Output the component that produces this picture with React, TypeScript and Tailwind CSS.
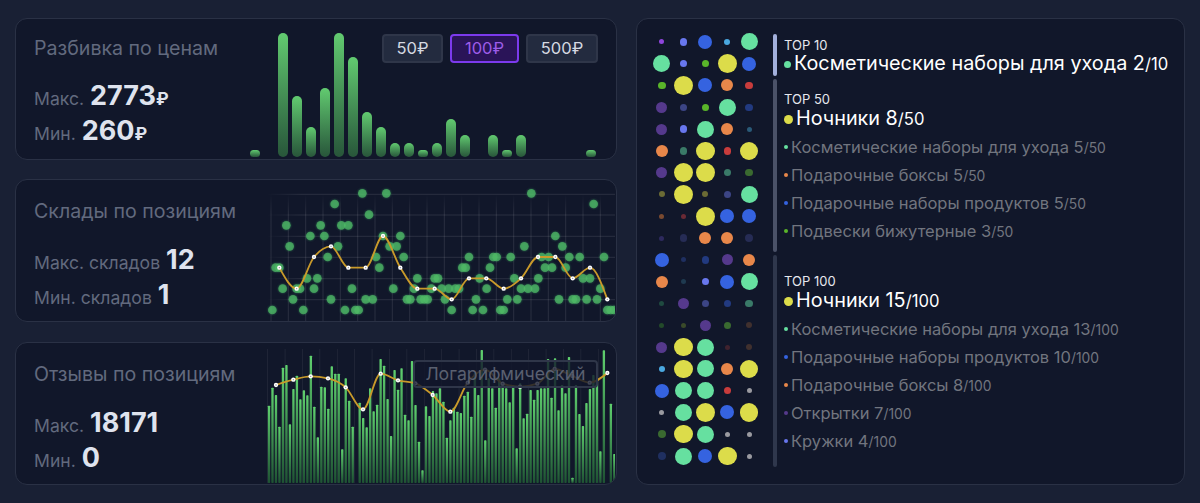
import type { ReactNode } from 'react';

type Point = [number, number];

const font = { fontFamily: 'Inter, "Noto Sans", sans-serif' };

const priceBars = [7, 0, 124, 61, 30, 69, 124, 100, 45, 30, 14, 14, 7, 14, 38, 22, 0, 22, 7, 22, 0, 0, 0, 0, 7];

const stockDots: Array<[number, number[]]> = [
  [55, [307, 379, 814]],
  [87, [224, 1001]],
  [119, [327]],
  [151, [79, 182, 244, 265]],
  [183, [151, 193, 369, 421, 886]],
  [214, [89, 234, 389, 410, 793, 907]],
  [246, [203, 348, 431, 627, 700, 710, 752, 845, 866, 928, 959, 1032]],
  [278, [47, 58, 358, 607, 617, 690, 855, 876, 917]],
  [310, [141, 172, 472, 524, 534, 659, 763, 835, 969, 990]],
  [341, [68, 110, 120, 162, 276, 400, 462, 514, 545, 566, 586, 597, 680, 783, 804, 825, 1021]],
  [373, [99, 213, 317, 338, 441, 451, 482, 493, 503, 555, 648, 742, 772, 897, 938, 948, 980, 1011]],
  [405, [37, 130, 255, 286, 296, 575, 638, 669, 721, 731, 1042, 1052, 1062]],
];

const stockLine: Point[] = [
  [58, 278], [110, 341], [162, 246], [213, 214], [265, 278], [317, 278], [369, 183], [421, 278], [472, 341], [524, 341],
  [575, 373], [627, 310], [679, 310], [731, 341], [783, 310], [834, 246], [886, 246], [938, 310], [990, 278], [1042, 373],
];

const reviewBars = [
  212, 158, 180, 275, 98, 90, 268, 162, 122, 193, 166, 181, 62, 215, 307, 155, 157, 221, 94, 116,
  116, 343, 130, 197, 275, 0, 203, 249, 277, 160, 229, 209, 72, 92, 192, 303, 105, 164, 100, 239,
  256, 78, 210, 320, 406, 214, 243, 168, 175, 160, 200, 308, 256, 218, 230, 234, 182, 170, 245, 115,
  180, 45, 316, 130, 160, 218, 130, 150, 160, 202, 150, 340, 145, 250, 236, 165, 194, 165, 160, 160,
  72, 188, 70, 226, 150, 175, 66, 428, 150, 237, 273, 204, 162, 120, 135, 349, 46, 0, 206, 357,
];

const reviewLine: Point[] = [
  [48, 150], [100, 134], [152, 124], [204, 130], [257, 157], [309, 223], [362, 116], [414, 136], [466, 145], [518, 180],
  [571, 230], [623, 143], [675, 104], [728, 146], [780, 155], [832, 146], [884, 102], [937, 123], [989, 143], [1042, 114],
];

const C = {
  violet: '#8f45dc',
  indigo: '#6877ee',
  blue: '#3563e0',
  sky: '#4aa8e0',
  mint: '#66e0a0',
  yellow: '#dcdc4a',
  green: '#5ab52a',
  orange: '#e8874a',
  red: '#c83c3c',
  plum: '#55398c',
  dusk: '#3c4585',
  navy: '#223a80',
  ocean: '#2a5a78',
  teal: '#3a7a68',
  moss: '#3a6a30',
  olive: '#6b6b35',
  rust: '#7a4a30',
  wine: '#6a2a35',
  ink: '#2e2a5e',
  slate: '#262c55',
  midnight: '#1f2f60',
  deep: '#1f3a50',
  pine: '#1f4a40',
  fern: '#234a2a',
  bark: '#3a4a2a',
  umber: '#40302e',
  maroon: '#40222e',
  gray: '#9a9aa0',
};

const S = { xs: 5, sm: 7.5, md: 11, lg: 12, xl: 14, mint: 17, yellow: 18.5 };

const matrix: Array<Array<[string, number]>> = [
  [[C.violet, S.xs], [C.indigo, S.sm], [C.blue, S.xl], [C.sky, 6], [C.mint, S.mint]],
  [[C.mint, S.mint], [C.indigo, S.sm], [C.green, S.sm], [C.yellow, S.yellow], [C.blue, S.xl]],
  [[C.green, S.sm], [C.yellow, S.yellow], [C.blue, S.xl], [C.orange, S.lg], [C.red, S.sm]],
  [[C.plum, S.md], [C.dusk, S.sm], [C.green, S.sm], [C.mint, S.mint], [C.navy, S.sm]],
  [[C.plum, S.md], [C.indigo, S.sm], [C.mint, S.mint], [C.orange, S.lg], [C.ocean, S.xs]],
  [[C.orange, S.lg], [C.teal, S.sm], [C.yellow, S.yellow], [C.red, S.sm], [C.yellow, S.yellow]],
  [[C.plum, S.md], [C.yellow, S.yellow], [C.yellow, S.yellow], [C.teal, S.sm], [C.moss, S.sm]],
  [[C.olive, 6], [C.yellow, S.yellow], [C.olive, 6], [C.dusk, S.sm], [C.mint, S.mint]],
  [[C.rust, S.xs], [C.wine, S.xs], [C.yellow, S.yellow], [C.blue, S.xl], [C.blue, S.xl]],
  [[C.ink, S.xs], [C.slate, S.sm], [C.orange, S.lg], [C.orange, S.lg], [C.slate, S.sm]],
  [[C.blue, S.xl], [C.midnight, S.xs], [C.navy, S.sm], [C.plum, S.md], [C.orange, S.lg]],
  [[C.orange, S.lg], [C.deep, S.xs], [C.indigo, S.sm], [C.blue, S.xl], [C.mint, S.mint]],
  [[C.pine, S.xs], [C.plum, S.md], [C.dusk, S.sm], [C.navy, S.sm], [C.teal, S.sm]],
  [[C.fern, S.xs], [C.bark, S.xs], [C.plum, S.md], [C.moss, S.sm], [C.umber, 6]],
  [[C.plum, S.md], [C.yellow, S.yellow], [C.mint, S.mint], [C.maroon, S.xs], [C.umber, 6]],
  [[C.sky, 6], [C.yellow, S.yellow], [C.mint, S.mint], [C.orange, S.lg], [C.yellow, S.yellow]],
  [[C.blue, S.xl], [C.mint, S.mint], [C.mint, S.mint], [C.red, S.sm], [C.gray, S.xs]],
  [[C.gray, S.xs], [C.mint, S.mint], [C.yellow, S.yellow], [C.blue, S.xl], [C.yellow, S.yellow]],
  [[C.moss, S.sm], [C.yellow, S.yellow], [C.mint, S.mint], [C.gray, S.xs], [C.gray, S.xs]],
  [[C.midnight, S.sm], [C.mint, S.mint], [C.blue, S.xl], [C.yellow, S.yellow], [C.gray, S.xs]],
];

// same curve as d3 curveMonotoneX
function monotonePath(points: Point[]) {
  const n = points.length;
  const tangents = points.map((point, i) => {
    if (i === 0 || i === n - 1) return 0;
    const h0 = point[0] - points[i - 1][0];
    const h1 = points[i + 1][0] - point[0];
    const s0 = (point[1] - points[i - 1][1]) / h0;
    const s1 = (points[i + 1][1] - point[1]) / h1;
    const p = (s0 * h1 + s1 * h0) / (h0 + h1);
    return (Math.sign(s0) + Math.sign(s1)) * Math.min(Math.abs(s0), Math.abs(s1), 0.5 * Math.abs(p));
  });
  const h0 = points[1][0] - points[0][0];
  tangents[0] = ((3 * (points[1][1] - points[0][1])) / h0 - tangents[1]) / 2;
  const hn = points[n - 1][0] - points[n - 2][0];
  tangents[n - 1] = ((3 * (points[n - 1][1] - points[n - 2][1])) / hn - tangents[n - 2]) / 2;

  let d = `M${points[0][0]},${points[0][1]}`;
  for (let i = 1; i < n; i++) {
    const [x0, y0] = points[i - 1];
    const [x1, y1] = points[i];
    const dx = (x1 - x0) / 3;
    d += `C${x0 + dx},${y0 + dx * tangents[i - 1]},${x1 - dx},${y1 - dx * tangents[i]},${x1},${y1}`;
  }
  return d;
}

function TrendLine({ points }: { points: Point[] }) {
  return (
    <g>
      <path d={monotonePath(points)} fill="none" stroke="#c99a2a" strokeWidth={5.5} />
      {points.map(([x, y]) => (
        <g key={x}>
          <circle cx={x} cy={y} r={6.5} fill="#ffffff" />
          <circle cx={x} cy={y} r={2} fill="#8d8f98" />
        </g>
      ))}
    </g>
  );
}

function Stat({ label, value, unit }: { label: string; value: string; unit?: string }) {
  return (
    <div className="flex h-[35px] items-baseline gap-[6px] whitespace-nowrap text-[17.6px] leading-[35px] text-[#626a7e]">
      <span>{label}</span>
      <span className="text-[27px] font-bold text-[#dfe3ee]">
        {value}
        {unit && <span className="text-[17px]">{unit}</span>}
      </span>
    </div>
  );
}

function StatCard({
  className,
  title,
  titleTop,
  statsTop,
  sideWidth,
  stats,
  children,
}: {
  className: string;
  title: string;
  titleTop: string;
  statsTop: string;
  sideWidth: string;
  stats: ReactNode;
  children: ReactNode;
}) {
  return (
    <div className={`relative flex overflow-hidden rounded-[12px] border border-[#2a3145] bg-[#11172a] ${className}`}>
      <div className={`shrink-0 pl-[18px] ${sideWidth}`}>
        <h2 className={`h-[28px] whitespace-nowrap text-[19.6px] font-normal leading-[28px] text-[#626a7e] ${titleTop}`}>{title}</h2>
        <div className={statsTop}>{stats}</div>
      </div>
      {children}
    </div>
  );
}

function StepButton({ label, active, width }: { label: string; active?: boolean; width: string }) {
  return (
    <button
      className={`flex h-[29px] items-center justify-center rounded-[4px] border-2 text-[16.5px] ${width} ${
        active ? 'border-[#7c3aed] bg-[#2a1458] text-[#9d5ce8]' : 'border-[#2f3649] bg-[#232b3f] text-[#d5d9e2]'
      }`}
    >
      {label}
    </button>
  );
}

function PriceChart() {
  return (
    <div className="flex items-end gap-[4px] pb-[2px]">
      {priceBars.map((height, i) => (
        <div
          key={i}
          className="w-[10px] rounded-full bg-gradient-to-b from-[#62cb70] to-[#28563a]"
          style={{ height }}
        />
      ))}
    </div>
  );
}

function StockChart() {
  const columns = Array.from({ length: 20 }, (_, i) => 33 + i * 52);
  const rows = [58, 120, 184, 247, 311, 374];
  return (
    <svg viewBox="0 15 1065 423" className="h-[141px] w-[355px] shrink-0">
      <defs>
        <linearGradient id="grid-v" x1="0" y1="0" x2="0" y2="1">
          <stop offset="0" stopColor="#ffffff" stopOpacity="0" />
          <stop offset="0.15" stopColor="#ffffff" stopOpacity="0.1" />
          <stop offset="1" stopColor="#ffffff" stopOpacity="0.1" />
        </linearGradient>
        <linearGradient id="grid-h" x1="0" y1="0" x2="1" y2="0">
          <stop offset="0" stopColor="#ffffff" stopOpacity="0" />
          <stop offset="0.1" stopColor="#ffffff" stopOpacity="0.1" />
          <stop offset="1" stopColor="#ffffff" stopOpacity="0.1" />
        </linearGradient>
      </defs>
      {columns.map((x) => (
        <rect key={x} x={x - 1.5} y={58} width={3} height={380} fill="url(#grid-v)" />
      ))}
      {rows.map((y) => (
        <rect key={y} x={20} y={y - 1.5} width={1045} height={3} fill="url(#grid-h)" />
      ))}
      <g className="drop-shadow-[0_0_3px_rgba(74,222,128,0.55)]">
        {stockDots.map(([y, xs]) =>
          xs.map((x) => <circle key={`${x}-${y}`} cx={x} cy={y} r={13} fill="#50bb66" fillOpacity={0.72} />),
        )}
      </g>
      <TrendLine points={stockLine} />
    </svg>
  );
}

function ReviewChart() {
  const columns = Array.from({ length: 21 }, (_, i) => 23 + i * 52.2);
  return (
    <svg viewBox="0 24 1065 423" className="h-[141px] w-[355px] shrink-0">
      <defs>
        <linearGradient id="review-bar" x1="0" y1="0" x2="0" y2="1">
          <stop offset="0" stopColor="#5fd06e" />
          <stop offset="1" stopColor="#1e5233" />
        </linearGradient>
      </defs>
      {columns.map((x) => (
        <rect key={x} x={x - 1} y={42} width={2} height={402} fill="#ffffff" fillOpacity={0.09} />
      ))}
      {reviewBars.map((top, i) =>
        top ? <rect key={i} x={23.5 + i * 10.465} y={top} width={7} height={444 - top} rx={2} fill="url(#review-bar)" /> : null,
      )}
      <TrendLine points={reviewLine} />
    </svg>
  );
}

function Fraction({ count, total }: { count: number; total: number }) {
  return (
    <span>
      {count}
      <span className="text-[0.84em]">/{total}</span>
    </span>
  );
}

function LeadRow({ color, name, count, total, dot }: { color: string; name: string; count: number; total: number; dot: string }) {
  return (
    <div className="flex h-[24px] items-center whitespace-nowrap text-[19.8px] text-white">
      <span className={`shrink-0 rounded-full ${dot}`} style={{ backgroundColor: color }} />
      <span>
        {name} <Fraction count={count} total={total} />
      </span>
    </div>
  );
}

function SubRow({ color, name, count, total }: { color: string; name: string; count: number; total: number }) {
  return (
    <div className="flex h-[28px] items-center gap-[3px] whitespace-nowrap text-[16.5px] text-[#71757f]">
      <span className="h-[4px] w-[4px] shrink-0 rounded-full" style={{ backgroundColor: color }} />
      <span>
        {name} <Fraction count={count} total={total} />
      </span>
    </div>
  );
}

export default function App() {
  return (
    <div className="flex h-[503px] w-[1200px] items-start gap-[19px] overflow-hidden bg-[#192034] pl-[15px] pt-[18px]" style={font}>
      <div className="flex w-[602px] flex-col">
        <StatCard
          className="h-[142px]"
          title="Разбивка по ценам"
          titleTop="mt-[15px]"
          statsTop="mt-[16px]"
          sideWidth="w-[234px]"
          stats={
            <>
              <Stat label="Макс." value="2773" unit="₽" />
              <Stat label="Мин." value="260" unit="₽" />
            </>
          }
        >
          <PriceChart />
          <div className="absolute right-[18px] top-[15px] flex gap-[7px]">
            <StepButton label="50₽" width="w-[61px]" />
            <StepButton label="100₽" width="w-[69px]" active />
            <StepButton label="500₽" width="w-[72px]" />
          </div>
        </StatCard>

        <StatCard
          className="mt-[19px] h-[143px]"
          title="Склады по позициям"
          titleTop="mt-[17px]"
          statsTop="mt-[17px]"
          sideWidth="w-[244px]"
          stats={
            <>
              <Stat label="Макс. складов" value="12" />
              <Stat label="Мин. складов" value="1" />
            </>
          }
        >
          <StockChart />
        </StatCard>

        <StatCard
          className="mt-[20px] h-[143px]"
          title="Отзывы по позициям"
          titleTop="mt-[17px]"
          statsTop="mt-[17px]"
          sideWidth="w-[244px]"
          stats={
            <>
              <Stat label="Макс." value="18171" />
              <Stat label="Мин." value="0" />
            </>
          }
        >
          <ReviewChart />
          <div className="absolute left-[397px] top-[17px] flex h-[28px] w-[185px] items-center justify-center rounded-[4px] border-2 border-[#2f3649] bg-[#11172a]/80 text-[17.7px] text-[#5a6070]">
            Логарифмический
          </div>
        </StatCard>
      </div>

      <div className="flex h-[467px] w-[549px] rounded-[12px] border border-[#2a3145] bg-[#11172a] pl-[14px] pt-[12px]">
        <div className="grid h-[436px] w-[109px] shrink-0 grid-cols-5 grid-rows-[repeat(20,21.8px)]">
          {matrix.flat().map(([color, size], i) => (
            <div key={i} className="flex items-center justify-center">
              <span className="rounded-full" style={{ backgroundColor: color, width: size, height: size }} />
            </div>
          ))}
        </div>

        <div className="ml-[13px] mt-[3px] flex flex-col gap-[3px]">
          <section className="flex h-[42px] gap-[7px]">
            <div className="w-[4px] rounded-full bg-[#a3b0dc]" />
            <div className="pt-[4px]">
              <div className="h-[14px] text-[13px] leading-[14px] text-[#e6e8ee]">TOP 10</div>
              <LeadRow color={C.mint} dot="mr-[3px] h-[7px] w-[7px]" name="Косметические наборы для ухода" count={2} total={10} />
            </div>
          </section>

          <section className="flex h-[173px] gap-[7px]">
            <div className="w-[4px] rounded-full bg-[#4b5268]" />
            <div className="pt-[13px]">
              <div className="h-[14px] text-[13px] leading-[14px] text-[#e6e8ee]">TOP 50</div>
              <div className="mt-[1px]">
                <LeadRow color={C.yellow} dot="mr-[3px] h-[9px] w-[9px]" name="Ночники" count={8} total={50} />
              </div>
              <div className="mt-[2px]">
                <SubRow color={C.mint} name="Косметические наборы для ухода" count={5} total={50} />
                <SubRow color={C.orange} name="Подарочные боксы" count={5} total={50} />
                <SubRow color={C.blue} name="Подарочные наборы продуктов" count={5} total={50} />
                <SubRow color={C.green} name="Подвески бижутерные" count={3} total={50} />
              </div>
            </div>
          </section>

          <section className="flex h-[212px] gap-[7px]">
            <div className="w-[4px] rounded-full bg-[#2f374c]" />
            <div className="pt-[19px]">
              <div className="h-[14px] text-[13px] leading-[14px] text-[#e6e8ee]">TOP 100</div>
              <div className="mt-[1px]">
                <LeadRow color={C.yellow} dot="mr-[3px] h-[9px] w-[9px]" name="Ночники" count={15} total={100} />
              </div>
              <div className="mt-[2px]">
                <SubRow color={C.mint} name="Косметические наборы для ухода" count={13} total={100} />
                <SubRow color={C.blue} name="Подарочные наборы продуктов" count={10} total={100} />
                <SubRow color={C.orange} name="Подарочные боксы" count={8} total={100} />
                <SubRow color={C.plum} name="Открытки" count={7} total={100} />
                <SubRow color={C.indigo} name="Кружки" count={4} total={100} />
              </div>
            </div>
          </section>
        </div>
      </div>
    </div>
  );
}
